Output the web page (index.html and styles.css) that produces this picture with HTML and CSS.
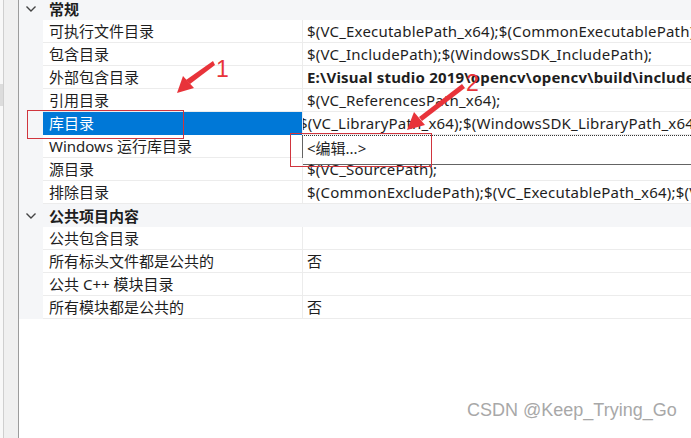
FILE: index.html
```html
<!DOCTYPE html>
<html lang="zh-CN">
<head>
    <meta charset="UTF-8">
    <title>VC++ 目录</title>
    <link rel="stylesheet" href="styles.css">
</head>
<body>
    <div class="page">
        <div class="edge"><div class="edge-mark"></div></div>
        <div class="sidebar"></div>

        <div class="grid">
            <div class="section">
                <span class="chevron"><svg width="12" height="8" viewBox="0 0 12 8"><path d="M1.5 1.5 L6 6 L10.5 1.5" fill="none" stroke="#444" stroke-width="1.4"/></svg></span>
                <span class="section-title">常规</span>
            </div>
            <div class="row"><span class="gutter"></span><span class="name">可执行文件目录</span><span class="value">$(VC_ExecutablePath_x64);$(CommonExecutablePath)</span></div>
            <div class="row"><span class="gutter"></span><span class="name">包含目录</span><span class="value">$(VC_IncludePath);$(WindowsSDK_IncludePath);</span></div>
            <div class="row"><span class="gutter"></span><span class="name">外部包含目录</span><span class="value bold">E:\Visual studio 2019\opencv\opencv\build\include</span></div>
            <div class="row"><span class="gutter"></span><span class="name">引用目录</span><span class="value">$(VC_ReferencesPath_x64);</span></div>
            <div class="row selected"><span class="gutter"></span><span class="name">库目录</span><span class="value shifted">$(VC_LibraryPath_x64);$(WindowsSDK_LibraryPath_x64)</span></div>
            <div class="row has-popup">
                <span class="gutter"></span><span class="name">Windows 运行库目录</span><span class="value"></span>
                <div class="popup">&lt;编辑...&gt;</div>
            </div>
            <div class="row"><span class="gutter"></span><span class="name">源目录</span><span class="value">$(VC_SourcePath);</span></div>
            <div class="row"><span class="gutter"></span><span class="name">排除目录</span><span class="value">$(CommonExcludePath);$(VC_ExecutablePath_x64);$(VC_LibraryPath_x64)</span></div>

            <div class="section">
                <span class="chevron"><svg width="12" height="8" viewBox="0 0 12 8"><path d="M1.5 1.5 L6 6 L10.5 1.5" fill="none" stroke="#444" stroke-width="1.4"/></svg></span>
                <span class="section-title">公共项目内容</span>
            </div>
            <div class="row"><span class="gutter"></span><span class="name">公共包含目录</span><span class="value"></span></div>
            <div class="row"><span class="gutter"></span><span class="name">所有标头文件都是公共的</span><span class="value">否</span></div>
            <div class="row"><span class="gutter"></span><span class="name">公共 C++ 模块目录</span><span class="value"></span></div>
            <div class="row"><span class="gutter"></span><span class="name">所有模块都是公共的</span><span class="value">否</span></div>
        </div>

        <!-- red annotations drawn over the screenshot -->
        <svg class="marks" width="691" height="438" viewBox="0 0 691 438">
            <rect x="27.5" y="110.5" width="156" height="28" fill="none" stroke="#d0353e" stroke-width="1"/>
            <rect x="290.5" y="133.5" width="141" height="33" fill="none" stroke="#d0353e" stroke-width="1"/>
            <polygon points="213,61 215,65 190,84 186,80" fill="#e8333a"/>
            <polygon points="177,93 183,76 194,88" fill="#e8333a"/>
            <polygon points="462,84 465,88 422,121 419,117" fill="#e8333a"/>
            <polygon points="407,130 414,112 425,125" fill="#e8333a"/>
            <text x="216" y="77" class="mark-num">1</text>
            <text x="466" y="91" class="mark-num">2</text>
        </svg>

        <div class="watermark">CSDN @Keep_Trying_Go</div>
    </div>
</body>
</html>
```

FILE: styles.css
```css
body {
    margin: 0;
    background-color: #ffffff;
    font-family: "Noto Sans", "Noto Sans CJK SC", sans-serif;
    font-size: 15px;
    color: #1e1e1e;
}
.page {
    position: relative;
    display: flex;
    width: 691px;
    height: 438px;
    overflow: hidden;
}
.edge {
    width: 3px;
    background-color: #f8f8f8;
    border-right: 1px solid #cfcfcf;
}
.edge-mark {
    margin-top: 84px;
    height: 22px;
    background-color: #dcdcdc;
}
.sidebar {
    width: 14px;
    background-color: #f0f0f0;
    border-right: 1px solid #9c9c9c;
}
.grid {
    flex: 1;
    margin-top: -3px;
    min-width: 0;
}
.section {
    display: flex;
    align-items: center;
    height: 23px;
    background-color: #f5f6f8;
}
.chevron {
    width: 24px;
    display: flex;
    justify-content: center;
    padding-top: 1px;
}
.section-title {
    padding-left: 6px;
    font-weight: bold;
}
.row {
    position: relative;
    display: grid;
    grid-template-columns: 24px 259px 1fr;
    height: 23px;
    line-height: 22px;
}
.gutter {
    background-color: #f5f6f8;
}
.name, .value {
    padding-left: 6px;
    border-bottom: 1px solid #ececec;
    white-space: nowrap;
    overflow: hidden;
}
.value {
    padding-left: 4px;
    border-left: 1px solid #ececec;
    letter-spacing: 0.2px;
}
.bold {
    font-weight: bold;
}
.selected .name {
    background-color: #0078d7;
    color: #ffffff;
    border-bottom-color: #0078d7;
}
.shifted {
    text-indent: -4px;
    padding-left: 0;
}
.popup {
    position: absolute;
    left: 283px;
    top: 0;
    right: 0;
    height: 30px;
    box-sizing: border-box;
    padding-left: 4px;
    line-height: 24px;
    background-color: #ffffff;
    border-top: 1px dotted #333333;
    border-left: 1px solid #646464;
    border-bottom: 1px solid #646464;
}
.marks {
    position: absolute;
    left: 0;
    top: 0;
}
.mark-num {
    font-family: "Liberation Sans", sans-serif;
    font-size: 23px;
    fill: #e8333a;
}
.watermark {
    position: absolute;
    left: 467px;
    top: 400px;
    font-family: "Liberation Sans", sans-serif;
    font-size: 18px;
    color: #a8a8a8;
}
```
